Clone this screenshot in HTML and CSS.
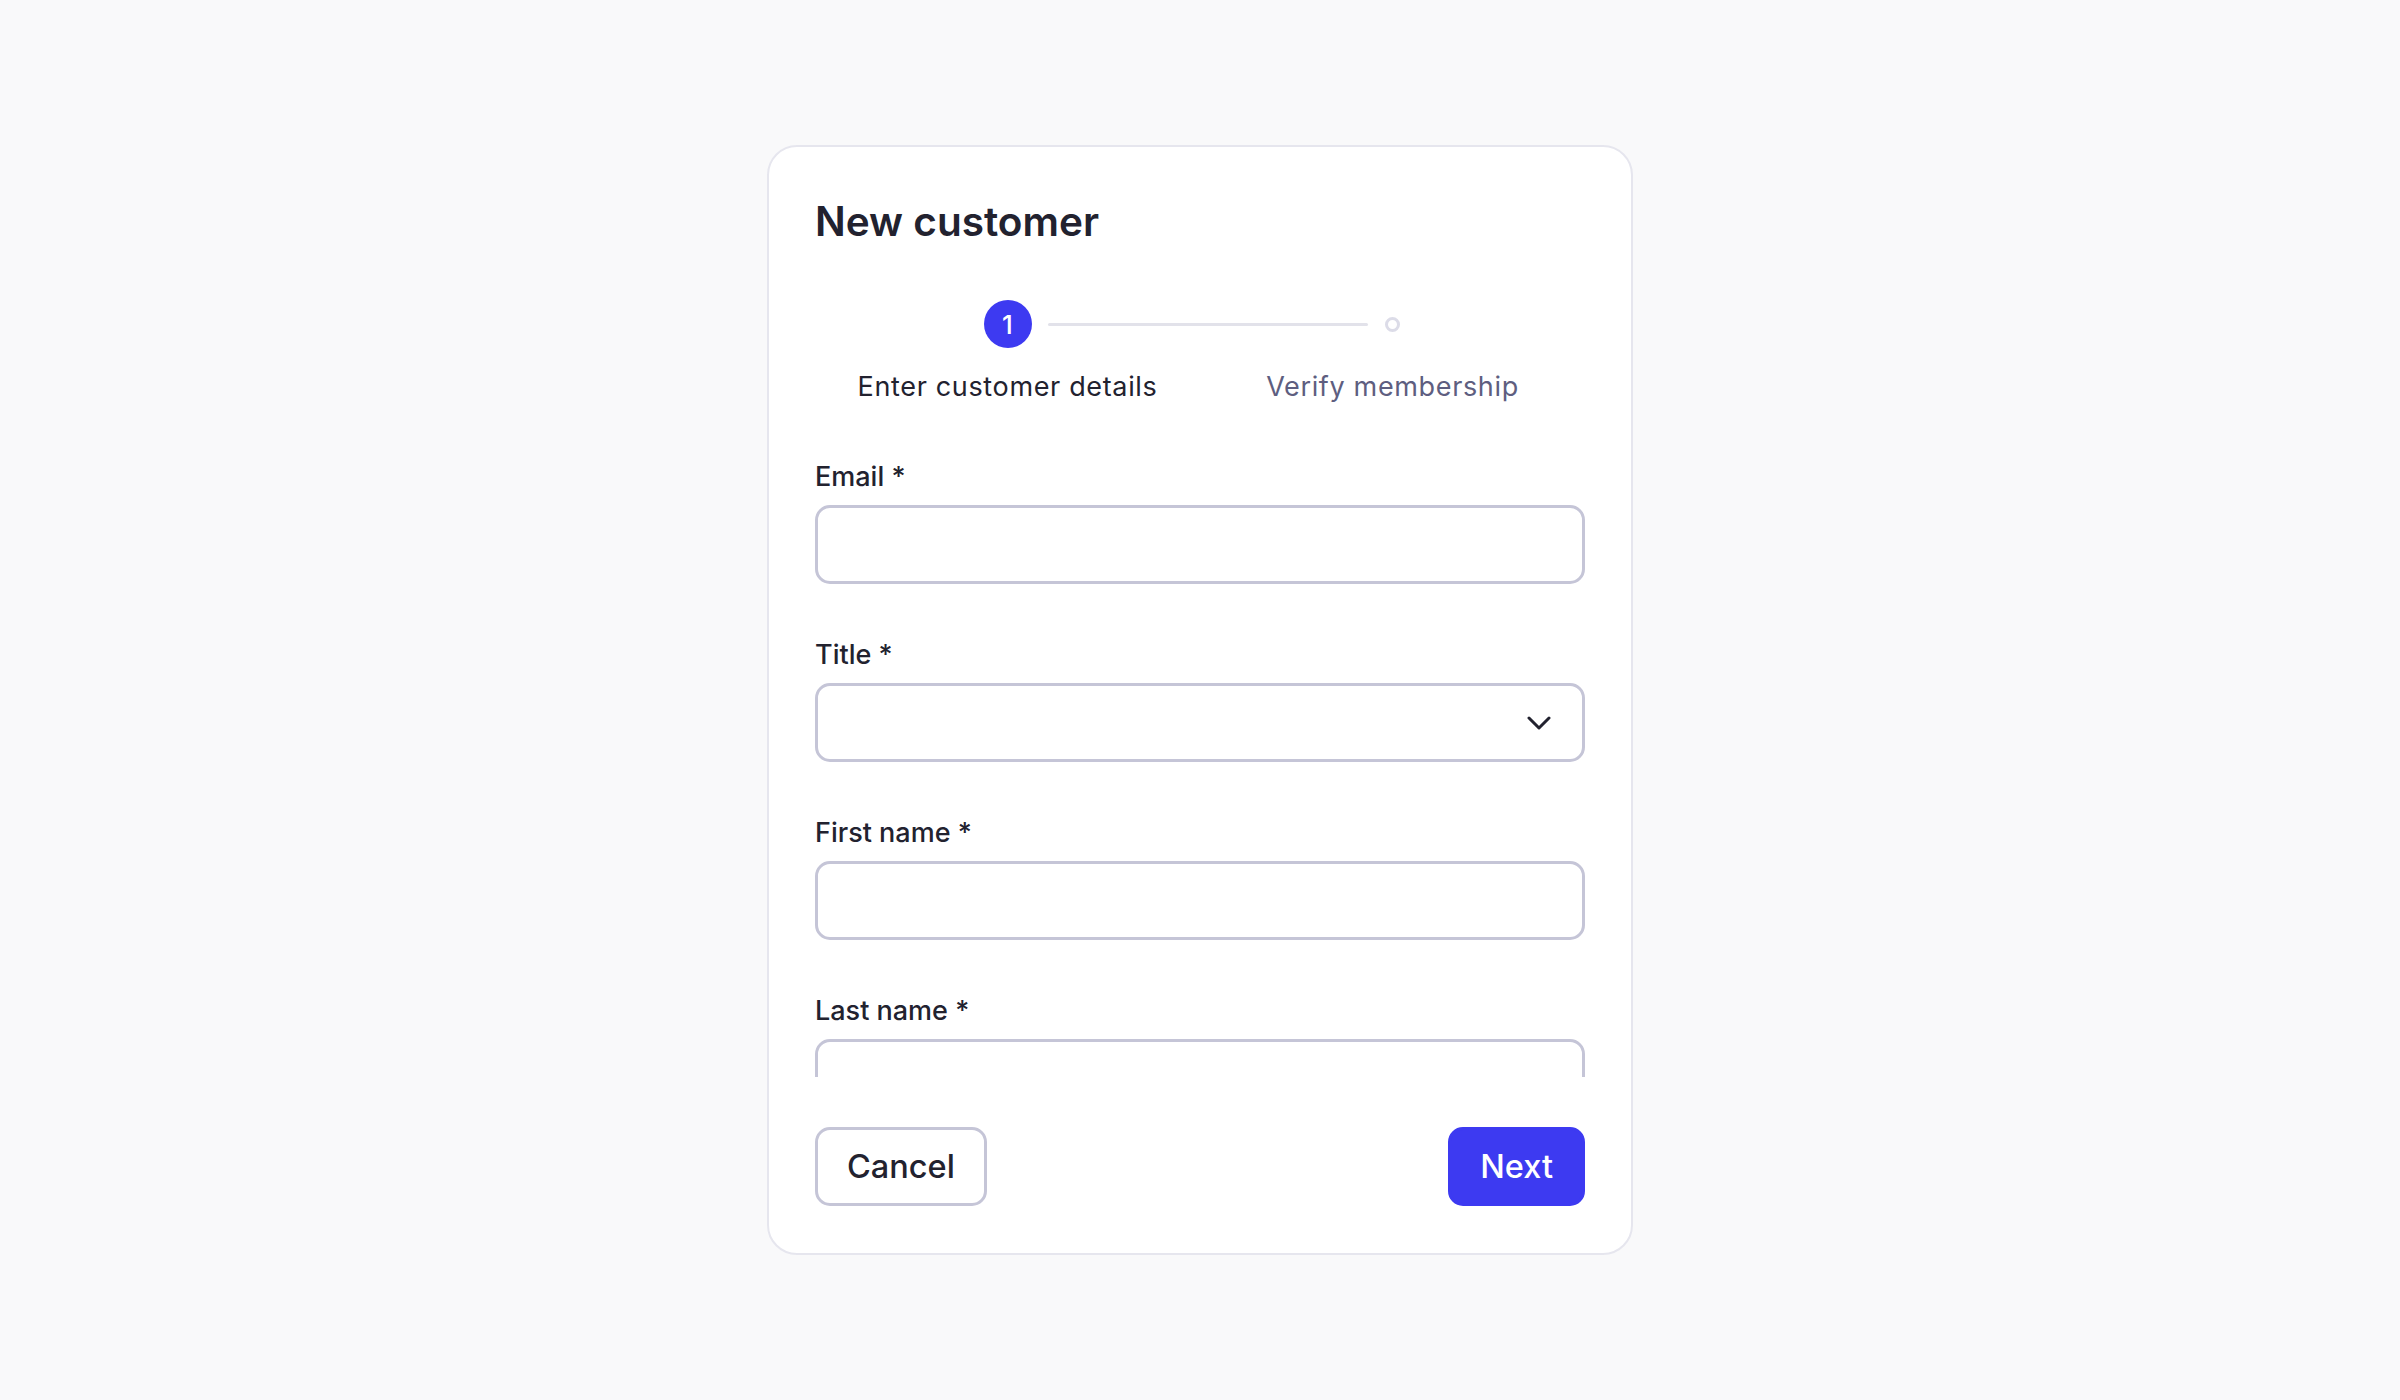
FILE: index.html
```html
<!DOCTYPE html>
<html lang="en">
<head>
<meta charset="utf-8">
<title>New customer</title>
<link rel="stylesheet" href="styles.css">
</head>
<body>
<main class="page">
  <section class="card">
    <h1 class="card-title">New customer</h1>
    <div class="stepper">
      <div class="stepper-track">
        <span class="step-dot step-dot-active">1</span>
        <span class="step-line"></span>
        <span class="step-dot step-dot-pending"></span>
      </div>
      <div class="stepper-labels">
        <span class="step-label step-label-active">Enter customer details</span>
        <span class="step-label step-label-pending">Verify membership</span>
      </div>
    </div>
    <form class="form-scroll">
      <div class="field">
        <label class="field-label">Email *</label>
        <div class="field-input"></div>
      </div>
      <div class="field">
        <label class="field-label">Title *</label>
        <div class="field-input field-select">
          <svg class="chevron" width="24" height="14" viewBox="0 0 24 14" fill="none"><path d="M2 2 L12 12 L22 2" stroke="#22222f" stroke-width="3" stroke-linecap="round" stroke-linejoin="round"/></svg>
        </div>
      </div>
      <div class="field">
        <label class="field-label">First name *</label>
        <div class="field-input"></div>
      </div>
      <div class="field">
        <label class="field-label">Last name *</label>
        <div class="field-input"></div>
      </div>
    </form>
    <div class="card-footer">
      <button class="btn btn-secondary" type="button">Cancel</button>
      <button class="btn btn-primary" type="button">Next</button>
    </div>
  </section>
</main>
</body>
</html>
```

FILE: styles.css
```css
* { box-sizing: border-box; }
html, body { margin: 0; padding: 0; }
body {
  background: #f9f9fa;
  font-family: Inter, "Noto Sans", "Liberation Sans", sans-serif;
  color: #22222f;
}
.page {
  width: 2400px;
  height: 1400px;
  display: flex;
  align-items: center;
  justify-content: center;
}
.card {
  width: 866px;
  background: #ffffff;
  border: 2px solid #e6e6ee;
  border-radius: 30px;
  padding: 50px 46px 47px;
  display: flex;
  flex-direction: column;
}
.card-title {
  margin: 0;
  font-size: 40.5px;
  line-height: 50px;
  font-weight: 600;
  color: #22222f;
}
.stepper {
  margin-top: 53px;
  display: flex;
  flex-direction: column;
  gap: 19px;
}
.stepper-track {
  display: flex;
  align-items: center;
  height: 48px;
  padding-left: 168.5px;
  padding-right: 185px;
}
.step-dot {
  flex: none;
  border-radius: 50%;
  display: flex;
  align-items: center;
  justify-content: center;
}
.step-dot-active {
  width: 48px;
  height: 48px;
  background: #3d3af1;
  color: #ffffff;
  font-size: 26px;
  font-weight: 500;
}
.step-dot-pending {
  width: 15px;
  height: 15px;
  border: 3px solid #dcdce8;
  background: #ffffff;
}
.step-line {
  flex: 1;
  height: 3px;
  background: #e2e2ea;
  border-radius: 2px;
  margin: 0 17px 0 16px;
}
.stepper-labels {
  display: grid;
  grid-template-columns: 1fr 1fr;
}
.step-label {
  text-align: center;
  font-size: 27px;
  line-height: 40px;
  letter-spacing: 0.65px;
}
.step-label-active { color: #22222f; }
.step-label-pending { color: #5e5e80; }
.form-scroll {
  margin: 50px 0 0;
  height: 620px;
  overflow: hidden;
  display: flex;
  flex-direction: column;
  gap: 51px;
}
.field {
  flex: none;
  display: flex;
  flex-direction: column;
  gap: 8px;
}
.field-label {
  font-size: 27px;
  line-height: 40px;
  font-weight: 500;
  color: #22222f;
}
.field-input {
  height: 79px;
  border: 3px solid #c5c5d7;
  border-radius: 15px;
  background: #ffffff;
}
.field-select {
  display: flex;
  align-items: center;
  justify-content: flex-end;
  padding-right: 31px;
}
.chevron { display: block; }
.card-footer {
  margin-top: 50px;
  display: flex;
  justify-content: space-between;
  align-items: center;
}
.btn {
  height: 79px;
  border-radius: 15px;
  font-family: Inter, "Noto Sans", "Liberation Sans", sans-serif;
  font-size: 32.5px;
  font-weight: 500;
  padding: 0 29px;
  cursor: pointer;
}
.btn-secondary {
  background: #ffffff;
  border: 3px solid #c5c5d7;
  color: #22222f;
}
.btn-primary {
  background: #3d3af1;
  border: 3px solid #3d3af1;
  color: #ffffff;
}
```
